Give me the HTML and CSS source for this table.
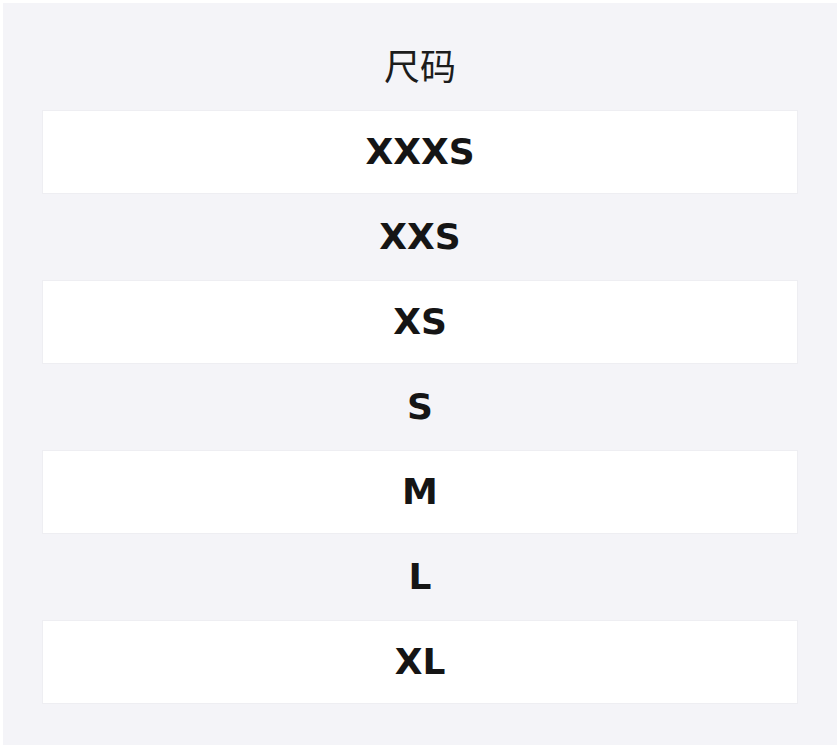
FILE: index.html
```html
<!DOCTYPE html>
<html lang="zh">
<head>
<meta charset="utf-8">
<title>尺码</title>
<link rel="stylesheet" href="styles.css">
</head>
<body>
<div class="panel">
  <div class="title">尺码</div>
  <ul class="sizes">
    <li class="row odd">XXXS</li>
    <li class="row">XXS</li>
    <li class="row odd">XS</li>
    <li class="row">S</li>
    <li class="row odd">M</li>
    <li class="row">L</li>
    <li class="row odd">XL</li>
  </ul>
</div>
</body>
</html>
```
FILE: styles.css
```css
html, body {
  margin: 0;
  padding: 0;
  background: #ffffff;
}
body {
  padding: 3px;
  font-family: "DejaVu Sans", "Noto Sans CJK SC", sans-serif;
}
.panel {
  background: #f4f4f8;
  height: 742px;
  box-sizing: border-box;
  padding: 37px 40px 42px;
  display: flex;
  flex-direction: column;
}
.title {
  font-family: "Noto Sans CJK SC", "DejaVu Sans", sans-serif;
  font-size: 36px;
  line-height: 48px;
  height: 48px;
  text-align: center;
  color: #1c1c1c;
  margin-bottom: 23px;
}
.sizes {
  list-style: none;
  margin: 0;
  padding: 0;
  display: flex;
  flex-direction: column;
  gap: 3px;
}
.row {
  height: 82px;
  box-sizing: border-box;
  padding-bottom: 2px;
  display: flex;
  align-items: center;
  justify-content: center;
  font-weight: bold;
  font-size: 36px;
  color: #151515;
}
.row.odd {
  background: #ffffff;
  box-shadow: 0 0 0 1px rgba(0, 0, 0, 0.025);
}
```
